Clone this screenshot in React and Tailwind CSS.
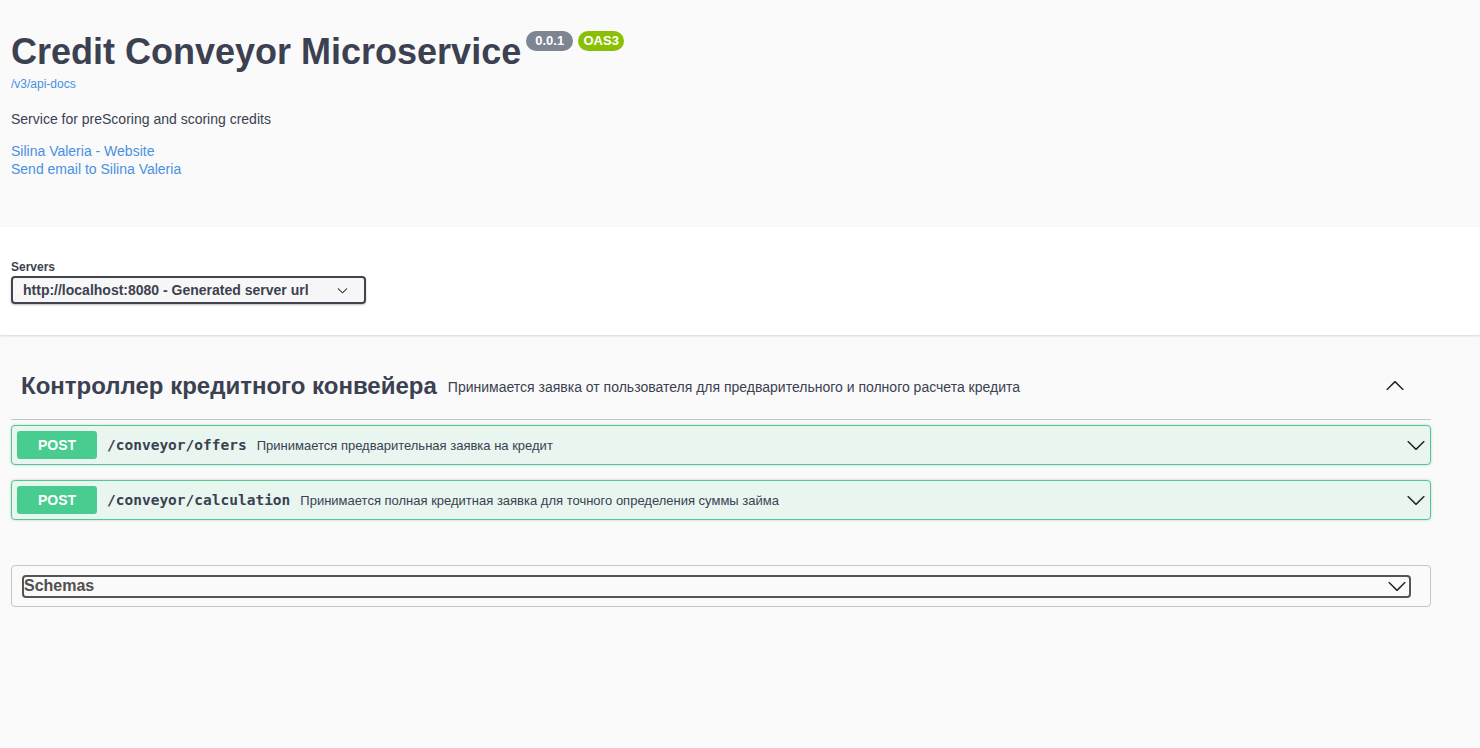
import React from 'react';

const Arrow = ({ up = false, className = '' }) => (
  <svg viewBox="0 0 20 20" className={className + (up ? ' rotate-180' : '')} fill="currentColor">
    <path d="M17.418 6.109c.272-.268.709-.268.979 0s.271.701 0 .969l-7.908 7.83c-.27.268-.707.268-.979 0l-7.908-7.83c-.27-.268-.27-.701 0-.969.271-.268.709-.268.979 0L10 13.25l7.418-7.141z" />
  </svg>
);

const ops = [
  { path: '/conveyor/offers', summary: 'Принимается предварительная заявка на кредит' },
  { path: '/conveyor/calculation', summary: 'Принимается полная кредитная заявка для точного определения суммы займа' },
];

const Opblock = ({ path, summary }) => (
  <div className="flex h-[40px] w-[1420px] items-center rounded-[4px] border border-[#49cc90] bg-[#e8f6ef] pl-[5px] pr-[4px] shadow-[0_0_3px_rgba(0,0,0,0.19)]">
    <span className="flex h-[28px] w-[80px] items-center justify-center rounded-[3px] bg-[#49cc90] text-[14px] font-bold text-white">
      POST
    </span>
    <span className="ml-[10px] mt-[1px] font-['DejaVu_Sans_Mono',monospace] text-[14.5px] font-bold text-[#3b4151]">{path}</span>
    <span className="ml-[10px] mt-[1px] text-[13px] text-[#3b4151]">{summary}</span>
    <Arrow className="ml-auto h-[20px] w-[20px] text-[#222]" />
  </div>
);

export default function App() {
  return (
    <div className="min-h-[748px] bg-[#fafafa] font-['Liberation_Sans',Arial,sans-serif] text-[#3b4151]">
      {/* info */}
      <div className="h-[227px] px-[11px] pt-[31px]">
        <div className="flex items-start">
          <h2 className="text-[36px] font-bold leading-[41px]">Credit Conveyor Microservice</h2>
          <span className="ml-[5px] flex h-[20px] w-[47px] items-center justify-center rounded-full bg-[#7d8492] text-[13px] font-bold text-white">0.0.1</span>
          <span className="ml-[5px] flex h-[20px] w-[46px] items-center justify-center rounded-full bg-[#89bf04] text-[13px] font-bold text-white">OAS3</span>
        </div>
        <div className="mt-[4px] text-[12px] leading-[16px] text-[#4990e2]">/v3/api-docs</div>
        <p className="mt-[17px] text-[14px] leading-[20px]">Service for preScoring and scoring credits</p>
        <div className="mt-[13px] text-[14px] leading-[18px] text-[#4990e2]">
          <div>Silina Valeria - Website</div>
          <div>Send email to Silina Valeria</div>
        </div>
      </div>

      {/* servers */}
      <div className="h-[108px] bg-white px-[11px] pt-[33px] shadow-[0_1px_2px_rgba(0,0,0,0.15)]">
        <div className="text-[12px] font-bold leading-[14px]">Servers</div>
        <div className="mt-[2px] flex h-[28px] w-[355px] items-center rounded-[4px] border-2 border-[#41444e] bg-[#f7f7f7] pl-[10px] pr-[16px] shadow-[0_1px_2px_rgba(0,0,0,0.25)]">
          <span className="text-[14px] font-bold">http://localhost:8080 - Generated server url</span>
          <Arrow className="ml-auto h-[11px] w-[11px] text-[#222]" />
        </div>
      </div>

      {/* tag */}
      <div className="px-[11px] pt-[38px]">
        <div className="flex h-[47px] w-[1420px] items-start border-b border-[#c4c6cb] pl-[10px] pr-[26px]">
          <div className="flex h-[26px] w-full items-center">
            <h3 className="text-[24px] font-bold">Контроллер кредитного конвейера</h3>
            <span className="ml-[11px] mt-[2px] text-[14px]">Принимается заявка от пользователя для предварительного и полного расчета кредита</span>
            <Arrow up className="ml-auto h-[20px] w-[20px] text-[#222]" />
          </div>
        </div>
        <div className="mt-[5px] flex flex-col gap-[15px]">
          {ops.map((o) => (
            <Opblock key={o.path} {...o} />
          ))}
        </div>

        {/* schemas */}
        <div className="mt-[45px] flex h-[42px] w-[1420px] items-center rounded-[4px] border border-[#c4c6cb] px-[10px]">
          <div className="flex h-[23px] w-[1389px] items-center rounded-[4px] border-2 border-[#555] pr-[2px]">
            <span className="text-[16px] font-bold leading-none text-[#505050]">Schemas</span>
            <Arrow className="ml-auto h-[20px] w-[20px] text-[#222]" />
          </div>
        </div>
      </div>
    </div>
  );
}
